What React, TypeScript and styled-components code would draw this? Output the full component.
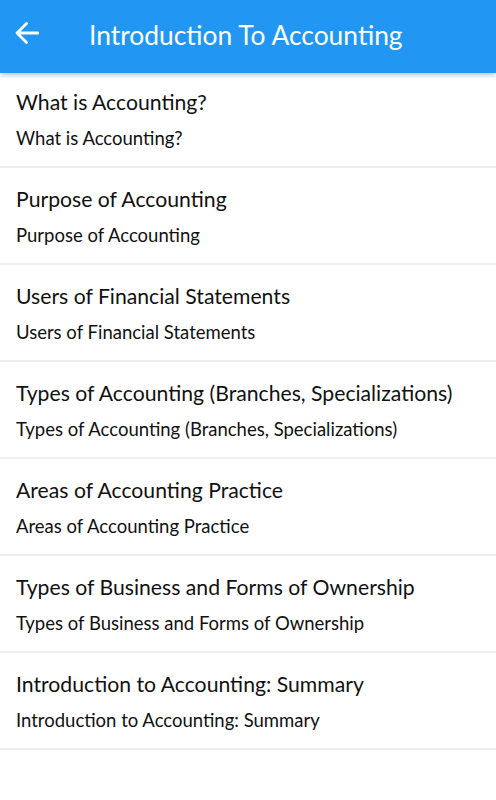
import React from "react";
import styled, { createGlobalStyle } from "styled-components";

const Global = createGlobalStyle`
  html, body { margin: 0; padding: 0; background: #ffffff; }
  body { font-family: Lato, "Open Sans", sans-serif; }
  * { box-sizing: border-box; }
`;

const Page = styled.div`
  width: 496px;
  min-height: 800px;
  background: #ffffff;
  display: flex;
  flex-direction: column;
`;

const AppBar = styled.header`
  position: relative;
  z-index: 2;
  height: 73px;
  background: #2196f3;
  display: flex;
  align-items: center;
  padding: 0 0 4px 15px;
  box-shadow: 0 2px 5px rgba(0, 0, 0, 0.25);
`;

const BackButton = styled.button`
  width: 24px;
  height: 22px;
  margin-bottom: 4px;
  padding: 0;
  border: none;
  background: transparent;
  display: flex;
  align-items: center;
  justify-content: center;
  cursor: pointer;
`;

const Title = styled.h1`
  margin: 0 0 0 50px;
  font-family: Lato, sans-serif;
  font-weight: 400;
  font-size: 26.4px;
  color: #ffffff;
  letter-spacing: 0;
`;

const List = styled.ul`
  list-style: none;
  margin: -2px 0 0;
  padding: 0;
`;

const Row = styled.li`
  padding: 19px 16px 17px;
  border-bottom: 2px solid #eeeeee;
  display: flex;
  flex-direction: column;
  gap: 12px;
`;

const RowTitle = styled.div`
  font-size: 21.2px;
  line-height: 25px;
  color: #111111;
`;

const RowSub = styled.div`
  font-size: 18.5px;
  line-height: 22px;
  color: #111111;
`;

const items = [
  "What is Accounting?",
  "Purpose of Accounting",
  "Users of Financial Statements",
  "Types of Accounting (Branches, Specializations)",
  "Areas of Accounting Practice",
  "Types of Business and Forms of Ownership",
  "Introduction to Accounting: Summary",
];

export default function App() {
  return (
    <Page>
      <Global />
      <AppBar>
        <BackButton aria-label="Back">
          <svg width="24" height="22" viewBox="0 0 24 22" fill="none">
            <path
              d="M23 11H2.5M11.5 1.5L2 11l9.5 9.5"
              stroke="#ffffff"
              strokeWidth="2.8"
              strokeLinecap="round"
              strokeLinejoin="round"
            />
          </svg>
        </BackButton>
        <Title>Introduction To Accounting</Title>
      </AppBar>
      <List>
        {items.map((t) => (
          <Row key={t}>
            <RowTitle>{t}</RowTitle>
            <RowSub>{t}</RowSub>
          </Row>
        ))}
      </List>
    </Page>
  );
}
